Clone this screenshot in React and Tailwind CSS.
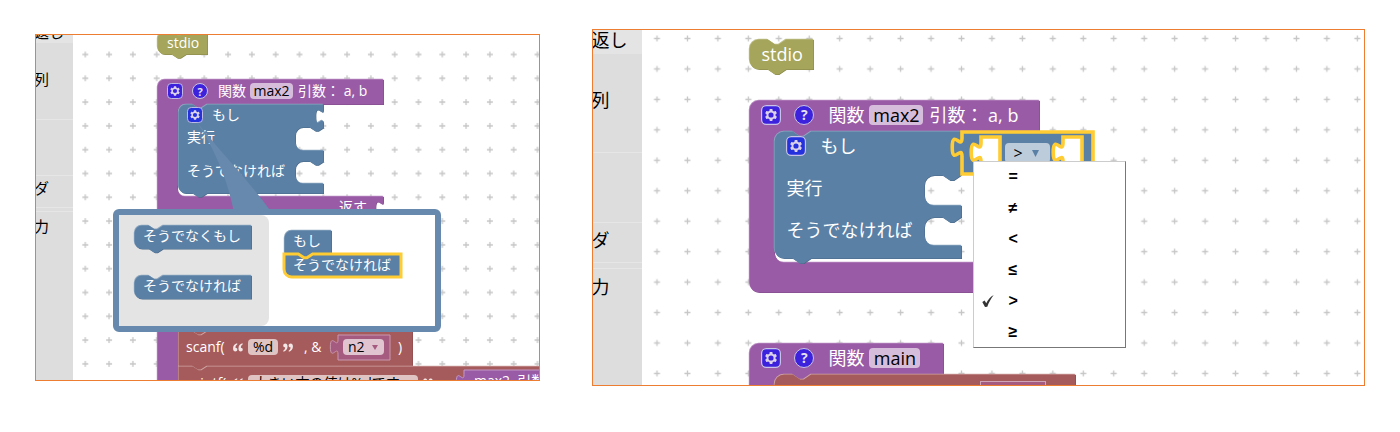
import React from "react";

const SIZES = {
  sm: {
    s: 0.955,
    text: "text-sm leading-[22px]",
    icon: "size-4",
    field: "h-4",
    help: "text-[11px]",
  },
  lg: {
    s: 1.22,
    text: "text-lg leading-7",
    icon: "size-5",
    field: "h-5",
    help: "text-sm",
  },
};

const COLORS = {
  purple: ["#995ba5", "#b98cc1", "#7b4984"],
  blue: ["#5b80a5", "#8ca6c0", "#496684"],
  olive: ["#a5a55b", "#c0c08c", "#848449"],
  red: ["#a55b5b", "#d0a5a5", "#844949"],
};

/* Path fragments of the puzzle outline, scaled by s. */
const parts = (s) => ({
  r: 8 * s,
  notchR: `l ${6 * s},${4 * s} h ${3 * s} l ${6 * s},${-4 * s}`,
  notchL: `l ${-6 * s},${4 * s} h ${-3 * s} l ${-6 * s},${-4 * s}`,
  tabDown: `v ${5 * s} c 0,${10 * s} ${-8 * s},${-8 * s} ${-8 * s},${7.5 * s} s ${8 * s},${-2.5 * s} ${8 * s},${7.5 * s}`,
  tabUp: `c 0,${-10 * s} ${-8 * s},${8 * s} ${-8 * s},${-7.5 * s} s ${8 * s},${2.5 * s} ${8 * s},${-7.5 * s}`,
});

const cavity = (s, right, x, top, bottom) => {
  const p = parts(s);
  return `V ${top} H ${x + 30 * s} ${p.notchL} H ${x + p.r} a ${p.r},${p.r} 0 0 0 ${-p.r},${p.r} V ${bottom - p.r} a ${p.r},${p.r} 0 0 0 ${p.r},${p.r} H ${right}`;
};

const statement = (s, w, h, { top = true, bottom = true, roundTop = true, roundBottom = true, body = "" } = {}) => {
  const p = parts(s);
  const arc = `a ${p.r},${p.r} 0 0 1`;
  return [
    roundTop ? `M 0,${p.r} ${arc} ${p.r},${-p.r}` : "M 0,0",
    top ? `H ${15 * s} ${p.notchR}` : "",
    `H ${w}`,
    body,
    `V ${h}`,
    bottom ? `H ${30 * s} ${p.notchL}` : "",
    roundBottom ? `H ${p.r} ${arc} ${-p.r},${-p.r}` : "H 0",
    "Z",
  ].join(" ");
};

const value = (s, w, h) => {
  const p = parts(s);
  return `M 0,0 H ${w} V ${h} H 0 V ${20 * s} ${p.tabUp} Z`;
};

function Shape({ d, color, outline }) {
  const [fill, light, dark] = COLORS[color];
  return (
    <svg className="pointer-events-none absolute inset-0 size-full overflow-visible" aria-hidden="true">
      {outline ? (
        <path d={d} fill={fill} fillRule="evenodd" stroke="#ffcc33" strokeWidth={outline} />
      ) : (
        <>
          <path d={d} fill={dark} transform="translate(1 1)" />
          <path d={d} fill={light} transform="translate(-.2 -.2)" />
          <path d={d} fill={fill} transform="translate(.5 .5)" />
        </>
      )}
    </svg>
  );
}

function Block({ className, d, color, outline, children }) {
  return (
    <div className={`absolute whitespace-pre text-white ${className}`}>
      <Shape d={d} color={color} outline={outline} />
      <div className="relative">{children}</div>
    </div>
  );
}

function Gear({ size, blue }) {
  return (
    <button type="button" aria-label="設定" className={`shrink-0 ${SIZES[size].icon}`}>
      <svg viewBox="-0.5 -0.5 17 17" className="block size-full">
        <rect width="16" height="16" rx="4" fill={blue ? "#2431dc" : "#3c22dc"} stroke="#c9c3e8" />
        <path
          fill="#dcd3ea"
          d="m4.203,7.296 0,1.368 -0.92,0.677 -0.11,0.41 0.9,1.559 0.41,0.11 1.043,-0.457 1.187,0.683 0.127,1.134 0.3,0.3 1.8,0 0.3,-0.299 0.127,-1.138 1.185,-0.682 1.046,0.458 0.409,-0.11 0.9,-1.559 -0.11,-0.41 -0.92,-0.677 0,-1.366 0.92,-0.677 0.11,-0.41 -0.9,-1.559 -0.409,-0.109 -1.046,0.458 -1.185,-0.682 -0.127,-1.138 -0.3,-0.299 -1.8,0 -0.3,0.3 -0.126,1.135 -1.187,0.682 -1.043,-0.457 -0.41,0.11 -0.899,1.559 0.108,0.409z"
        />
        <circle cx="8" cy="8" r="2.2" fill={blue ? "#2431dc" : "#3c22dc"} />
      </svg>
    </button>
  );
}

function Help({ size }) {
  return (
    <button
      type="button"
      className={`flex shrink-0 items-center justify-center rounded-full border border-[#c9c3e8] bg-[#3c22dc] font-bold leading-none text-[#e6e0f2] ${SIZES[size].icon} ${SIZES[size].help}`}
    >
      ?
    </button>
  );
}

function Field({ size, label, value, className }) {
  return (
    <input
      aria-label={label}
      defaultValue={value}
      className={`shrink-0 rounded p-0 text-center text-black outline-none ${SIZES[size].field} ${className}`}
    />
  );
}

function Quote({ close }) {
  return (
    <svg viewBox="0 0 12 10" className="h-[9px] w-3 shrink-0" aria-hidden="true">
      <path
        fill="#f3e6e6"
        transform={close ? "rotate(180 6 5)" : undefined}
        d="M5 .4C2.200 1.100.5 3.200.5 6.100.5 8.200 1.500 9.500 3 9.500c1.300 0 2.300-.9 2.300-2.200C5.300 6 4.400 5.200 3.200 5.200 3.100 3.600 3.800 2.300 5.300 1.300zM11 .4C8.200 1.100 6.500 3.200 6.500 6.100c0 2.100 1 3.400 2.500 3.400 1.300 0 2.300-.9 2.300-2.200 0-1.300-.9-2.100-2.100-2.100-.1-1.600.6-2.900 2.100-3.900z"
      />
    </svg>
  );
}

function Grid({ id, step, x, y }) {
  const c = step / 2;
  return (
    <svg className="absolute inset-0 size-full" aria-hidden="true">
      <defs>
        <pattern id={id} x={x - c} y={y - c} width={step} height={step} patternUnits="userSpaceOnUse">
          <path d={`M ${c - 3},${c} h 6 M ${c},${c - 3} v 6`} stroke="#c6c6c6" strokeWidth="1.3" />
        </pattern>
      </defs>
      <rect width="100%" height="100%" fill={`url(#${id})`} />
    </svg>
  );
}

function Toolbox({ width, text, rows }) {
  return (
    <nav className={`shrink-0 overflow-hidden bg-[#ddd] text-black ${width} ${text}`}>
      {rows.map(([label, box], i) => (
        <div key={i} className={`flex ${box}`}>
          {label && (
            <button type="button" className="-ml-0.5 shrink-0 whitespace-nowrap">
              {label}
            </button>
          )}
        </div>
      ))}
    </nav>
  );
}

function Workspace({ className, toolbox, children }) {
  return (
    <section className={`flex min-w-0 overflow-hidden border border-[#ed7d31] bg-white ${className}`}>
      {toolbox}
      <div className="relative min-w-0 flex-1">{children}</div>
    </section>
  );
}

function Mutator() {
  const s = SIZES.sm.s;
  return (
    <div className="absolute left-10 top-[174px] h-[123px] w-[328px]">
      <svg className="absolute -top-[88px] left-[82px] h-[92px] w-20" viewBox="0 0 80 92" aria-hidden="true">
        <path d="M1 0 C18 24 34 62 39 92 H77 C56 62 28 34 1 0Z" fill="#6689ad" />
      </svg>
      <div className="relative flex h-full rounded-md border-[6px] border-[#6689ad] bg-white">
        <div className="relative w-[150px] rounded-r-lg bg-[#e4e4e4]">
          <Block className="left-[15px] top-[10px] h-6 w-[117px] pl-[9px]" color="blue" d={statement(s, 117, 23.5)}>
            そうでなくもし
          </Block>
          <Block
            className="left-[15px] top-[60px] h-6 w-[117px] pl-[9px]"
            color="blue"
            d={statement(s, 117, 23.5, { bottom: false })}
          >
            そうでなければ
          </Block>
        </div>
        <div className="relative flex-1">
          <Block
            className="left-[15px] top-[15px] h-6 w-12 pl-[9px]"
            color="blue"
            d={statement(s, 47, 23, { top: false, roundBottom: false })}
          >
            もし
          </Block>
          <Block
            className="left-[15px] top-[39px] h-6 w-[117px] pl-[9px]"
            color="blue"
            outline={3}
            d={statement(s, 117, 23, { bottom: false, roundTop: false })}
          >
            そうでなければ
          </Block>
        </div>
      </div>
    </div>
  );
}

function LeftWorkspace() {
  const s = SIZES.sm.s;
  const p = parts(s);
  return (
    <Workspace
      className="h-[347px] flex-[505]"
      toolbox={
        <Toolbox
          width="w-[37px]"
          text="text-[15px] leading-[22px]"
          rows={[
            ["返し", "h-2 items-end bg-[#e4e4e4]"],
            ["列", "h-[76px] items-start pt-[25px]"],
            ["", "h-14 border-t border-[#e6e6e6]"],
            ["ダ", "h-8 items-start border-t border-[#e6e6e6] pt-px"],
            ["", "h-1 border-t border-[#e6e6e6]"],
            ["力", "items-start border-t border-[#e6e6e6] pt-[3px]"],
          ]}
        />
      }
    >
      <Grid id="grid-left" step={23.8} x={12.3} y={19.5} />
      <div className={SIZES.sm.text}>
        <Block className="-top-1 left-[84px] h-6 w-[50px] pl-[10px] pt-px" color="olive" d={statement(s, 50, 23)}>
          stdio
        </Block>

        <Block
          className="left-[84px] top-[205px] h-40 w-[227px]"
          color="purple"
          d={statement(s, 227, 200, { top: false, bottom: false, body: "V 24 H 20" })}
        />
        <Block
          className="left-[84px] top-[44px] w-[227px]"
          color="purple"
          d={statement(s, 226, 150, {
            top: false,
            bottom: false,
            body: `${cavity(s, 226, 20, 25, 117)} ${p.tabDown}`,
          })}
        >
          <div className="flex h-6 items-center pl-[10px]">
            <Gear size="sm" />
            <div className="flex items-center pl-[9px]">
              <Help size="sm" />
            </div>
            <span className="pl-[10px]">関数</span>
            <div className="flex items-center pl-1 pr-[5px]">
              <Field size="sm" label="関数名" value="max2" className="w-[43px] bg-[#d6bddb]" />
            </div>
            <span>引数： a, b</span>
          </div>
          <div className="flex justify-end pr-[17px] pt-[93px]">返す</div>
        </Block>

        <Block
          className="left-[105px] top-[69px] w-[145px] pl-[9px]"
          color="blue"
          d={statement(s, 145, 89, {
            body: `${p.tabDown} ${cavity(s, 145, 117, 23, 46)} ${cavity(s, 145, 117, 57, 79)}`,
          })}
        >
          <div className="flex h-[22px] items-center gap-[9px]">
            <Gear size="sm" blue />
            もし
          </div>
          <div className="pt-px leading-5">実行</div>
          <div className="pt-[14px] leading-5">そうでなければ</div>
        </Block>

        <Block
          className="left-[105px] top-[261px] h-[35px] w-[235px]"
          color="red"
          d={statement(s, 234, 35, { roundTop: false, roundBottom: false })}
        />
        <Block
          className="left-[105px] top-[296px] w-[235px] pl-2"
          color="red"
          d={statement(s, 234, 35, { roundTop: false, roundBottom: false })}
        >
          <div className="flex h-8 items-center">
            <span className="w-[46px]">scanf(</span>
            <Quote />
            <div className="flex items-center px-1">
              <Field size="sm" label="書式" value="%d" className="w-[30px] bg-[#e0c4c4]" />
            </div>
            <Quote close />
            <span className="w-11 pl-[10px]">, &amp;</span>
            <div className="relative h-[25px] w-[52px]">
              <svg className="absolute inset-0 size-full overflow-visible" aria-hidden="true">
                <path d={value(s, 52, 25)} fill="#a55b80" stroke="#c998ae" />
              </svg>
              <div className="relative flex h-full items-center pl-[5px]">
                <select
                  aria-label="変数"
                  className="h-4 w-[41px] appearance-none rounded bg-[#e0c4d0] py-0 pl-[5px] leading-4 text-black"
                >
                  <option>n2</option>
                </select>
                <svg viewBox="0 0 6 5" className="pointer-events-none absolute right-3 h-[5px] w-[6px]" aria-hidden="true">
                  <path d="M0 0h6L3 5z" fill="#a55b80" />
                </svg>
              </div>
            </div>
            <span className="pl-2">)</span>
          </div>
        </Block>

        <Block
          className="left-[105px] top-[331px] h-10 w-[460px] pl-2"
          color="red"
          d={statement(s, 460, 50, { roundTop: false, roundBottom: false })}
        >
          <div className="flex items-center pt-1">
            <span className="w-[46px]">printf(</span>
            <Quote />
            <div className="flex items-center px-1">
              <Field size="sm" label="文字列" value="大きい方の値は%dです。" className="w-[170px] bg-[#e0c4c4]" />
            </div>
            <Quote close />
            <div className="relative ml-[30px] h-[25px] w-40 pl-[10px]">
              <svg className="absolute inset-0 size-full overflow-visible" aria-hidden="true">
                <path d={value(s, 160, 25)} fill="#995ba5" stroke="#c49bca" />
              </svg>
              <span className="relative">max2  引数</span>
            </div>
          </div>
        </Block>

        <Mutator />
      </div>
    </Workspace>
  );
}

function OperatorMenu() {
  return (
    <ul
      role="listbox"
      aria-label="比較演算子"
      className="absolute left-[331px] top-[131px] grid h-[187px] w-[153px] auto-rows-fr border border-b-[#777] border-l-[#ccc] border-r-[#777] border-t-[#ccc] bg-white font-['Liberation_Sans',sans-serif] text-base font-bold text-black"
    >
      {["=", "≠", "<", "≤", ">", "≥"].map((op) => (
        <li key={op} role="option" aria-selected={op === ">"} className="flex items-center">
          <span className="flex w-[34px] justify-start pl-2">
            {op === ">" && (
              <svg viewBox="0 0 12 12" className="size-3" aria-hidden="true">
                <path d="M0.300 6.900 L2.700 5.600 L4.200 8.200 C6 5 8.300 2 11.700 .1 C8.900 4 6.800 7.500 5.300 11.700 L3 12 Z" fill="#333" />
              </svg>
            )}
          </span>
          {op}
        </li>
      ))}
    </ul>
  );
}

function RightWorkspace() {
  const s = SIZES.lg.s;
  const p = parts(s);
  const slot = (x) => `M ${x},5 h 19 v 30 h -19 V ${5 + 20 * s} ${p.tabUp} Z`;
  return (
    <Workspace
      className="h-[357px] flex-[773]"
      toolbox={
        <Toolbox
          width="w-[49px]"
          text="text-lg leading-7"
          rows={[
            ["返し", "h-6 items-end bg-[#e4e4e4]"],
            ["列", "h-[98px] items-start pt-8"],
            ["", "h-[70px] border-t border-[#e6e6e6]"],
            ["ダ", "h-10 items-start border-t border-[#e6e6e6] pt-[3px]"],
            ["", "h-[6px] border-t border-[#e6e6e6]"],
            ["力", "items-start border-t border-[#e6e6e6] pt-1"],
          ]}
        />
      }
    >
      <Grid id="grid-right" step={30.45} x={15} y={8.5} />
      <div className={SIZES.lg.text}>
        <Block className="left-[107px] top-[9px] h-[30px] w-16 pl-3 pt-px" color="olive" d={statement(s, 64, 30)}>
          stdio
        </Block>

        <Block
          className="left-[107px] top-[70px] w-[290px]"
          color="purple"
          d={statement(s, 290, 192, { top: false, bottom: false, body: cavity(s, 290, 25, 31, 162) })}
        >
          <div className="flex h-[30px] items-center pl-3">
            <Gear size="lg" />
            <div className="flex items-center pl-[13px]">
              <Help size="lg" />
            </div>
            <span className="pl-[14px]">関数</span>
            <div className="flex items-center pl-[5px] pr-[6px]">
              <Field size="lg" label="関数名" value="max2" className="w-[54px] bg-[#d6bddb]" />
            </div>
            <span>引数： a, b</span>
          </div>
        </Block>

        <Block
          className="left-[132px] top-[101px] w-[188px] pl-3"
          color="blue"
          d={statement(s, 187, 127, {
            body: `${cavity(s, 187, 150, 44, 74)} ${cavity(s, 187, 150, 86, 114)}`,
          })}
        >
          <div className="flex h-[30px] items-center gap-[14px]">
            <Gear size="lg" blue />
            もし
          </div>
          <div className="pt-[13px]">実行</div>
          <div className="pt-[14px]">そうでなければ</div>
        </Block>

        <Block
          className="left-80 top-[102px] h-[42px] w-[131px]"
          color="blue"
          outline={3.6}
          d={value(s, 131, 42)}
        >
          <svg className="absolute inset-0 size-full overflow-visible" aria-hidden="true">
            <path d={slot(19)} fill="#fff" stroke="#ffcc33" strokeWidth="3.6" />
            <path d={slot(101)} fill="#fff" stroke="#ffcc33" strokeWidth="3.6" />
          </svg>
          <div className="relative flex pl-[43px] pt-[11px]">
            <button
              type="button"
              aria-haspopup="listbox"
              aria-expanded="true"
              className="flex h-5 w-[45px] items-center gap-[9px] rounded bg-[#bdccdb] pl-2 text-base text-black"
            >
              &gt;
              <svg viewBox="0 0 7 7" className="size-[7px]" aria-hidden="true">
                <path d="M0 0h7L3.500 7z" fill="#5b80a5" />
              </svg>
            </button>
          </div>
        </Block>

        <Block
          className="left-[107px] top-[313px] w-[195px]"
          color="purple"
          d={statement(s, 194, 120, { top: false, bottom: false, body: cavity(s, 194, 25, 31, 90) })}
        >
          <div className="flex h-[30px] items-center pl-3">
            <Gear size="lg" />
            <div className="flex items-center pl-[13px]">
              <Help size="lg" />
            </div>
            <span className="pl-[14px]">関数</span>
            <div className="flex items-center pl-[5px]">
              <Field size="lg" label="関数名" value="main" className="w-[51px] bg-[#d6bddb]" />
            </div>
          </div>
        </Block>
        <Block className="left-[132px] top-[344px] h-8 w-[302px]" color="red" d={statement(s, 301, 40)}>
          <svg className="absolute left-[206px] top-[7px] h-8 w-[66px]" aria-hidden="true">
            <rect x=".5" y=".5" width="65" height="40" fill="#a55b80" stroke="#d0a5b8" />
          </svg>
        </Block>

        <OperatorMenu />
      </div>
    </Workspace>
  );
}

export default function App() {
  return (
    <main className="flex items-center gap-[52px] bg-white px-[35px] pt-[29px] font-['Open_Sans','Noto_Sans_CJK_JP',sans-serif]">
      <LeftWorkspace />
      <RightWorkspace />
    </main>
  );
}
